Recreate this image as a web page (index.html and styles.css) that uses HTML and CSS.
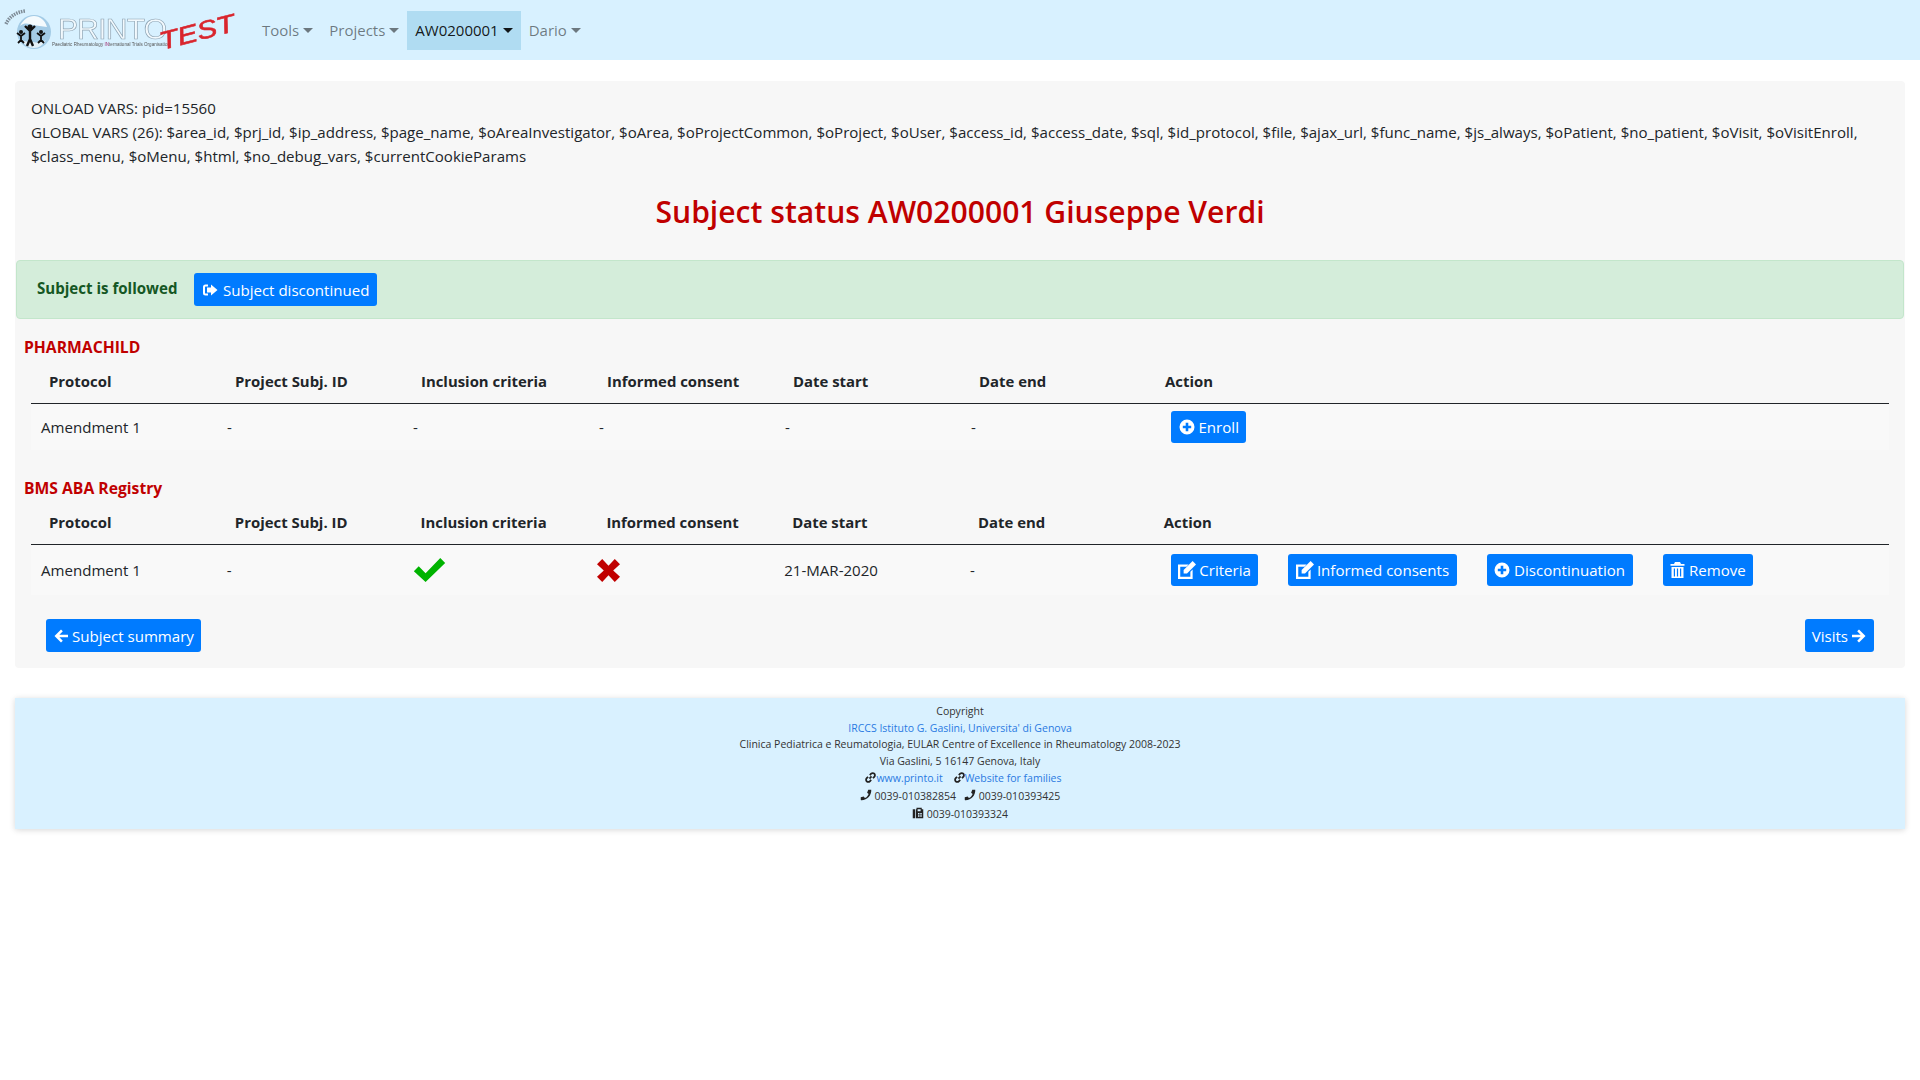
FILE: index.html
```html
<!DOCTYPE html>
<html lang="en">
<head>
<meta charset="UTF-8" />
<title>Subject status</title>
<link rel="stylesheet" href="styles.css">
</head>
<body>

<nav class="navbar">
  <a class="brand" href="#">
    <svg class="logo" width="253" height="60" viewBox="0 0 253 60">
      <circle cx="34" cy="32" r="17" fill="#a3cbe6"/>
      <path d="M20 26c5-4 9-2 13-1s9 1 14 2c-2-7-7-11-13-11s-11 4-14 10z" fill="#f4fafd"/>
      <path d="M21 40c4 2 8 1 12 2s9 1 13-2c-3 5-7 8-12 8s-10-3-13-8z" fill="#e3f0f8"/>
      <path d="M6 24C9 17 16 12 25 11" fill="none" stroke="#7d8a95" stroke-width="3.500" stroke-dasharray="1.500 1"/>
      <g fill="#111" stroke="#111">
        <circle cx="21" cy="32" r="2" stroke="none"/>
        <path d="M21 35v5M21 36l-4-3M21 36l4-3M21 40l-3 3M21 40l3 3" stroke-width="1.800" fill="none"/>
        <circle cx="30" cy="27" r="2.600" stroke="none"/>
        <path d="M30 30v9M30 31l-5-5M30 31l5-5M30 39l-3 7M30 39l3 7" stroke-width="2.400" fill="none"/>
        <circle cx="41" cy="32" r="2" stroke="none"/>
        <path d="M41 35v5M41 36l-4-3M41 36l4-3M41 40l-3 3M41 40l3 3" stroke-width="1.800" fill="none"/>
      </g>
      <text class="logo-word" x="58" y="39" textLength="109">PRINTO</text>
      <text class="logo-sub" x="52" y="46" textLength="118">Paediatric Rheumatology <tspan class="logo-sub-in">IN</tspan>ternational Trials Organisation</text>
      <text class="logo-test" transform="translate(162 50) rotate(-14.500)" textLength="77" lengthAdjust="spacingAndGlyphs">TEST</text>
    </svg>
  </a>
  <ul class="nav">
    <li class="nav-item"><a href="#">Tools<span class="caret"></span></a></li>
    <li class="nav-item"><a href="#">Projects<span class="caret"></span></a></li>
    <li class="nav-item active"><a href="#">AW0200001<span class="caret"></span></a></li>
    <li class="nav-item"><a href="#">Dario<span class="caret"></span></a></li>
  </ul>
</nav>

<main class="card">
  <div class="debug">
    <div>ONLOAD VARS: pid=15560</div>
    <div>GLOBAL VARS (26): $area_id, $prj_id, $ip_address, $page_name, $oAreaInvestigator, $oArea, $oProjectCommon, $oProject, $oUser, $access_id, $access_date, $sql, $id_protocol, $file, $ajax_url, $func_name, $js_always, $oPatient, $no_patient, $oVisit, $oVisitEnroll, $class_menu, $oMenu, $html, $no_debug_vars, $currentCookieParams</div>
  </div>

  <h1 class="title">Subject status AW0200001 Giuseppe Verdi</h1>

  <div class="alert">
    <strong>Subject is followed</strong>
    <a class="btn btn-wide" href="#">
      <svg class="ico" viewBox="0 0 16 16"><path d="M6 2.500H3.500A2.500 2.500 0 0 0 1 5v6a2.500 2.500 0 0 0 2.500 2.500H6v-2H3.500a.5.5 0 0 1-.5-.5V5a.5.5 0 0 1 .5-.5H6z"/><path d="M9 2.500 15.500 8 9 13.500V10.500H5v-5h4z"/></svg>
      Subject discontinued
    </a>
  </div>

  <h2 class="project">PHARMACHILD</h2>
  <table class="protocols">
    <thead>
      <tr><th>Protocol</th><th>Project Subj. ID</th><th>Inclusion criteria</th><th>Informed consent</th><th>Date start</th><th>Date end</th><th>Action</th></tr>
    </thead>
    <tbody>
      <tr>
        <td>Amendment 1</td><td>-</td><td>-</td><td>-</td><td>-</td><td>-</td>
        <td class="actions">
          <div class="action-list">
            <a class="btn" href="#"><svg class="ico" viewBox="0 0 16 16"><use href="#plus-circle"/></svg> Enroll</a>
          </div>
        </td>
      </tr>
    </tbody>
  </table>

  <h2 class="project second">BMS ABA Registry</h2>
  <table class="protocols tall">
    <thead>
      <tr><th>Protocol</th><th>Project Subj. ID</th><th>Inclusion criteria</th><th>Informed consent</th><th>Date start</th><th>Date end</th><th>Action</th></tr>
    </thead>
    <tbody>
      <tr>
        <td>Amendment 1</td><td>-</td>
        <td><svg class="mark" width="33" height="24" viewBox="1 1 32 24.500"><path d="M1 14.500 6 9.500l7 7L28 1 33 6 13 25.500z" fill="#00b300"/></svg></td>
        <td><svg class="mark mark-x" width="23" height="23" viewBox="1 1 22 22"><path d="M1 6 6 1l6 6.500L18 1l5 5-6.500 6 6.500 6-5 5-6-6.500L6 23l-5-5 6.500-6z" fill="#c00000"/></svg></td>
        <td>21-MAR-2020</td><td>-</td>
        <td class="actions">
          <div class="action-list">
            <a class="btn btn-edit" href="#"><svg class="ico ico-edit" viewBox="0 0 16 16"><use href="#edit"/></svg> Criteria</a>
            <a class="btn btn-edit" href="#"><svg class="ico ico-edit" viewBox="0 0 16 16"><use href="#edit"/></svg> Informed consents</a>
            <a class="btn" href="#"><svg class="ico" viewBox="0 0 16 16"><use href="#plus-circle"/></svg> Discontinuation</a>
            <a class="btn" href="#"><svg class="ico ico-trash" viewBox="0 0 14 16"><path d="M4.500 0h5l1 2H14v1.800H0V2h3.500zM1 5h12v11H1zm2.300 1.500v8h1.200v-8zm3.100 0v8h1.200v-8zm3.100 0v8h1.200v-8z" fill-rule="evenodd"/></svg> Remove</a>
          </div>
        </td>
      </tr>
    </tbody>
  </table>

  <div class="pager">
    <a class="btn" href="#"><svg class="ico" viewBox="0 0 16 16"><path d="M8 1.500 9.800 3.300 6.400 6.700H15v2.600H6.400l3.400 3.400L8 14.500 1.500 8z"/></svg> Subject summary</a>
    <a class="btn" href="#">Visits <svg class="ico" viewBox="0 0 16 16"><path d="M8 1.500 6.200 3.300l3.400 3.400H1v2.600h8.600l-3.400 3.400L8 14.500 14.500 8z"/></svg></a>
  </div>
</main>

<svg class="defs" width="0" height="0">
  <symbol id="edit" viewBox="0 0 16 16">
    <path d="M0 3h9.500L7.500 5H2v9h9V9.500l2-2V16H0z"/>
    <path d="M13 0 16 3 8 11H5V8z"/>
  </symbol>
  <symbol id="plus-circle" viewBox="0 0 16 16">
    <path fill-rule="evenodd" d="M8 .5a7.500 7.500 0 1 1 0 15 7.500 7.500 0 0 1 0-15zM6.700 3.800v3H3.800v2.500h2.900v2.900h2.600V9.300h2.900V6.800H9.300v-3z"/>
  </symbol>
  <symbol id="link" viewBox="0 0 16 16">
    <path d="M6.500 9.500 9.500 6.500M7 4.500l2-2a3 3 0 0 1 4.500 4.500l-2 2M9 11.500l-2 2A3 3 0 0 1 2.500 9l2-2" fill="none" stroke="#222" stroke-width="2.600"/>
  </symbol>
  <symbol id="phone" viewBox="0 0 16 16">
    <path d="M11 1h4c.5 7-5 14-13 14-1 0-1-1-1-1v-3l4-1 1.500 2c2.500-1 4-3 5-5.500L9.500 5z"/>
  </symbol>
</svg>

<footer class="footer">
  <div>Copyright</div>
  <div><a href="#">IRCCS Istituto G. Gaslini, Universita' di Genova</a></div>
  <div>Clinica Pediatrica e Reumatologia, EULAR Centre of Excellence in Rheumatology 2008-2023</div>
  <div>Via Gaslini, 5 16147 Genova, Italy</div>
  <div class="foot-row foot-links">
    <a href="#"><svg class="fico" viewBox="0 0 16 16"><use href="#link"/></svg>www.printo.it</a>
    <a href="#"><svg class="fico" viewBox="0 0 16 16"><use href="#link"/></svg>Website for families</a>
  </div>
  <div class="foot-row foot-phones">
    <span><svg class="fico fico-lg" viewBox="0 0 16 16"><use href="#phone"/></svg> 0039-010382854</span>
    <span><svg class="fico fico-lg" viewBox="0 0 16 16"><use href="#phone"/></svg> 0039-010393425</span>
  </div>
  <div class="foot-row foot-fax"><svg class="fico fico-lg" viewBox="0 0 16 16"><path fill-rule="evenodd" d="M1 3h3v12H1zM5 3h1V1h7v2h2v12H5zm3 5v2h2V8zm3 0v2h2V8zm-3 3v2h2v-2zm3 0v2h2v-2zM7.500 3v2.500h4V3z"/></svg> 0039-010393324</div>
</footer>

</body>
</html>
```

FILE: styles.css
```css
* { box-sizing: border-box; }
body { margin: 0; padding-bottom: 40px; font-family: "Open Sans", "Noto Sans", sans-serif; font-size: 15.07px; line-height: 24px; color: #212529; background: #fff; }
a { text-decoration: none; }

.navbar { display: flex; align-items: center; height: 60px; background: #d8f1ff; }
.brand { display: block; width: 254px; height: 60px; flex: none; }
.logo { display: block; filter: blur(.3px); overflow: visible; }
.logo-word { font-family: "Liberation Sans", sans-serif; font-size: 30px; fill: #f2f9fd; stroke: #8fa5b5; stroke-width: .7; }
.logo-sub { font-family: "Liberation Sans", sans-serif; font-size: 4.500px; fill: #555; }
.logo-sub-in { fill: #a03070; }
.logo-test { font-family: "Liberation Sans", sans-serif; font-style: italic; font-size: 25px; fill: #d9252d; stroke: #d9252d; stroke-width: .6; }

.nav { display: flex; list-style: none; margin: 0; padding: 0; font-size: 15px; }
.nav-item a { display: block; padding: 7.500px 8px; color: rgba(0,0,0,.5); }
.nav-item.active a { background: #b0dcf2; color: rgba(0,0,0,.9); }
.caret { display: inline-block; margin-left: 4px; vertical-align: 3px; border-top: 5px solid; border-left: 5px solid transparent; border-right: 5px solid transparent; }

.card { margin: 21px 15px 0; height: 587px; background: #f7f7f7; border-radius: 4px; padding: 15px 1px 0; }
.debug { padding: 0 15px; }
.title { margin: 20px 0 24px; font-size: 30.100px; line-height: 48px; font-weight: 600; color: #c00000; text-align: center; }

.alert { display: flex; align-items: center; gap: 17px; height: 59px; padding: 0 20px; background: #d4edda; border: 1px solid #c3e6cb; border-radius: 4px; color: #155724; }
.alert strong { position: relative; top: -2px; }

.btn { display: inline-flex; align-items: center; gap: 4px; height: 33px; padding: 0 7.500px; background: #007bff; color: #fff; border-radius: 3px; white-space: nowrap; }
.btn-wide { gap: 5px; }
.btn-edit { gap: 3px; }
.ico { width: 16px; height: 16px; fill: #fff; flex: none; }
.ico-edit { width: 18px; height: 18px; }
.ico-trash { width: 15px; }

.project { margin: 16px 0 0 8px; font-size: 15.700px; line-height: 24px; font-weight: 700; color: #c00000; }
.project.second { margin-top: 26px; }

.protocols { width: 1858px; margin: 8px 0 0 15px; border-collapse: collapse; table-layout: fixed; }
.protocols th { width: 186px; height: 36px; padding: 0 0 7px 18px; text-align: left; font-size: 14.900px; font-weight: 700; border-bottom: 1px solid #212529; }
.protocols th:last-child { width: auto; }
.protocols td { height: 47px; padding: 1px 0 0 10px; background: #f9f9f9; }
.protocols td.actions { padding-left: 24px; }
.action-list { display: flex; gap: 30px; }
.action-list .btn { height: 32px; }
.protocols.tall th { width: 185.800px; }
.protocols.tall th:last-child { width: auto; }
.protocols.tall td { height: 51px; }
.protocols.tall td.actions { padding-left: 25px; }
.mark { display: block; }
.mark-x { margin-left: -1px; }

.pager { display: flex; justify-content: space-between; padding: 24px 30px 0; }
.pager .btn { gap: 3px; padding: 0 7px; }

.defs { position: absolute; }

.footer { margin: 30px 15px 0; height: 131px; padding: 5px 0 0; background: #d9f1ff; box-shadow: 0 1px 6px rgba(0,0,0,.16); text-align: center; font-size: 10.500px; line-height: 16.500px; color: #333; }
.footer a { color: #2a7ae2; }
.foot-row { line-height: 18px; }
.fico { width: 11px; height: 11px; fill: #222; vertical-align: -1px; }
.fico-lg { width: 12px; height: 12px; }
.foot-links { display: flex; justify-content: center; gap: 11px; padding-left: 7px; }
.foot-phones { display: flex; justify-content: center; gap: 8px; }
.foot-fax { line-height: 19px; }
```
